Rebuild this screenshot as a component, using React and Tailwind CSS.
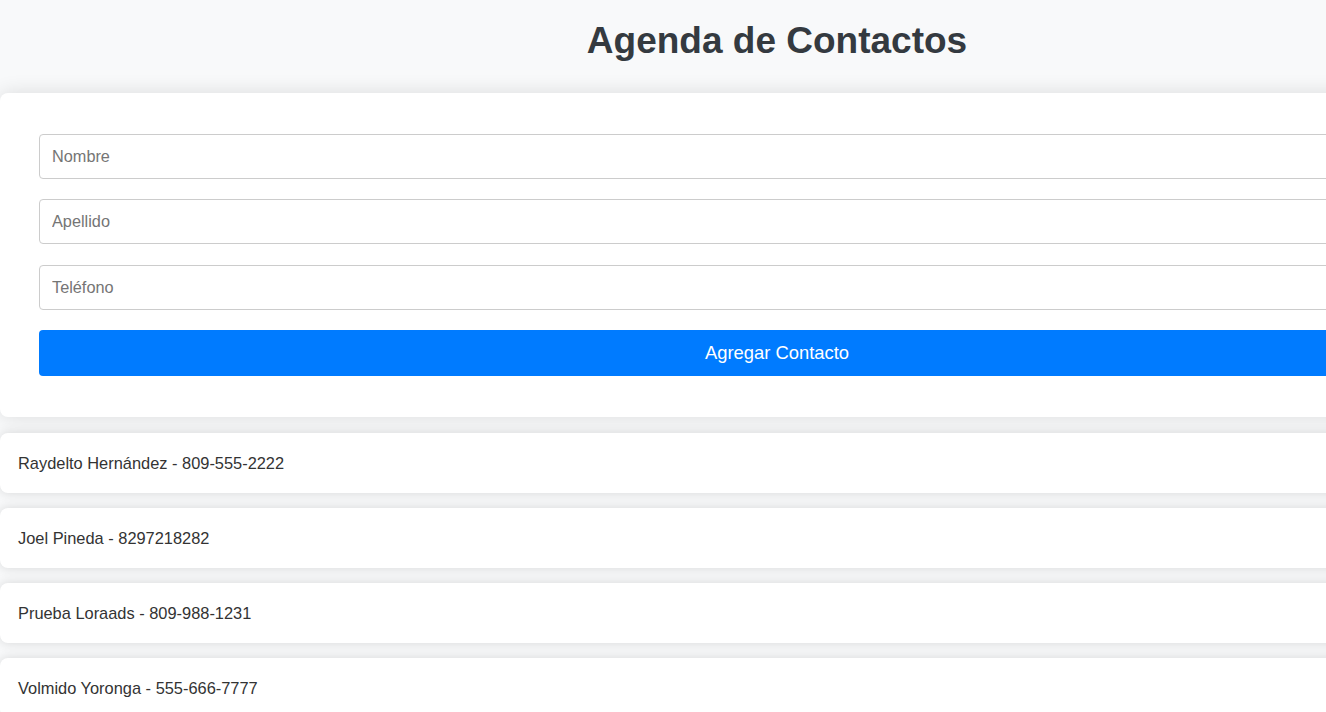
import React from 'react';

const contactos = [
  { nombre: 'Raydelto', apellido: 'Hernández', telefono: '809-555-2222' },
  { nombre: 'Joel', apellido: 'Pineda', telefono: '8297218282' },
  { nombre: 'Prueba', apellido: 'Loraads', telefono: '809-988-1231' },
  { nombre: 'Volmido', apellido: 'Yoronga', telefono: '555-666-7777' },
];

const App = () => {
  return (
    <div className="min-h-screen overflow-hidden bg-[#f8f9fa] font-['Liberation_Sans',Arial,sans-serif] text-[#333]">
      <div className="w-[1554px] mx-auto">
        <h1 className="text-center text-[37px] leading-[44px] font-bold text-[#343a40] pt-[19px] mb-[30px]">
          Agenda de Contactos
        </h1>

        {/* Formulario */}
        <form className="bg-white rounded-lg shadow-[0_0_20px_rgba(0,0,0,0.12)] px-[39px] pt-[41px] pb-[41px] flex flex-col">
          <input
            type="text"
            placeholder="Nombre"
            className="h-[45px] w-full border border-[#ccc] rounded px-[12px] text-[16.3px] placeholder:text-[#757575] outline-none"
          />
          <input
            type="text"
            placeholder="Apellido"
            className="h-[45px] w-full border border-[#ccc] rounded px-[12px] text-[16.3px] placeholder:text-[#757575] outline-none mt-[20px]"
          />
          <input
            type="text"
            placeholder="Teléfono"
            className="h-[45px] w-full border border-[#ccc] rounded px-[12px] text-[16.3px] placeholder:text-[#757575] outline-none mt-[21px]"
          />
          <button
            type="button"
            className="h-[46px] w-full bg-[#007bff] text-white text-[18.4px] rounded mt-[20px]"
          >
            Agregar Contacto
          </button>
        </form>

        {/* Lista de contactos */}
        <ul className="mt-[16px] flex flex-col gap-[15px]">
          {contactos.map((c) => (
            <li
              key={c.telefono}
              className="h-[60px] flex items-center bg-white rounded-lg shadow-[0_0_12px_rgba(0,0,0,0.14)] px-[18px] text-[16.4px] text-[#333]"
            >
              {c.nombre} {c.apellido} - {c.telefono}
            </li>
          ))}
        </ul>
      </div>
    </div>
  );
};

export default App;
